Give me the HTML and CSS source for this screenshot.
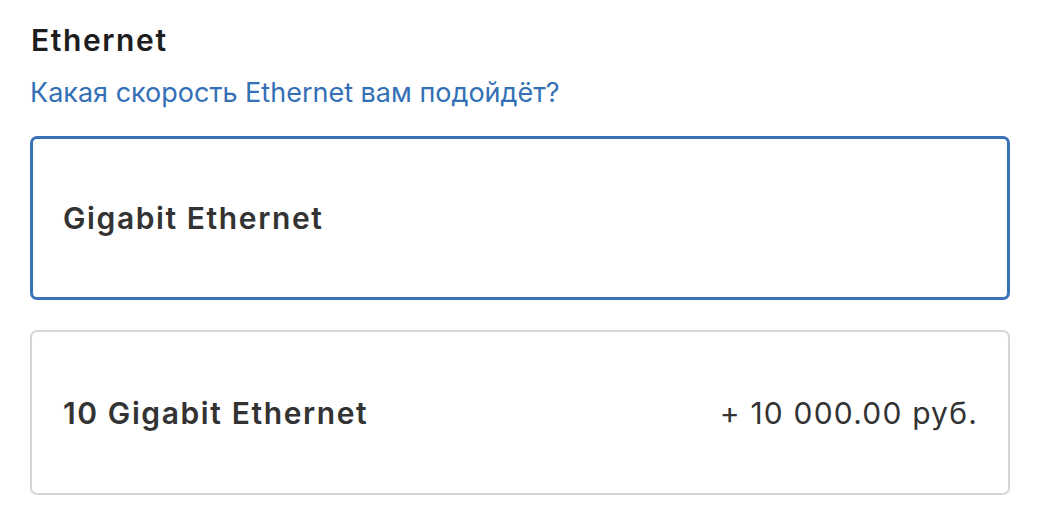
FILE: index.html
```html
<!DOCTYPE html>
<html lang="ru">
<head>
    <meta charset="UTF-8">
    <title>Ethernet</title>
    <link rel="stylesheet" href="styles.css">
</head>
<body>
    <section class="option-group">
        <h2 class="group-title">Ethernet</h2>
        <a class="help-link" href="#">Какая скорость Ethernet вам подойдёт?</a>
        <div class="choices">
            <label class="choice selected">
                <span class="choice-name">Gigabit Ethernet</span>
            </label>
            <label class="choice">
                <span class="choice-name">10 Gigabit Ethernet</span>
                <span class="choice-price">+ 10 000.00 руб.</span>
            </label>
        </div>
    </section>
</body>
</html>
```

FILE: styles.css
```css
body{
    margin: 0;
    background: #fff;
    font-family: Inter, "Noto Sans", sans-serif;
    color: #333;
}
.option-group{
    padding: 22px 34px 0 30px;
}
.group-title{
    margin: 0 0 0 1px;
    font-size: 30px;
    font-weight: 600;
    line-height: 36px;
    letter-spacing: 1.6px;
    color: #1d1d1f;
}
.help-link{
    display: block;
    margin-top: 19px;
    font-size: 27px;
    line-height: 32px;
    color: #3470b6;
    text-decoration: none;
}
.choices{
    margin-top: 27px;
    display: flex;
    flex-direction: column;
    gap: 30px;
}
.choice{
    display: flex;
    justify-content: space-between;
    align-items: center;
    height: 165px;
    box-sizing: border-box;
    padding: 0 30px 0 31px;
    border: 2px solid #d6d6d6;
    border-radius: 7px;
}
.choice.selected{
    height: 164px;
    border: 3px solid #3a72b9;
    padding: 0 30px;
}
.choice-name{
    font-size: 30px;
    font-weight: 600;
    letter-spacing: 1.6px;
    color: #333;
}
.choice-price{
    font-size: 30px;
    letter-spacing: 1.2px;
    color: #333;
}
```
